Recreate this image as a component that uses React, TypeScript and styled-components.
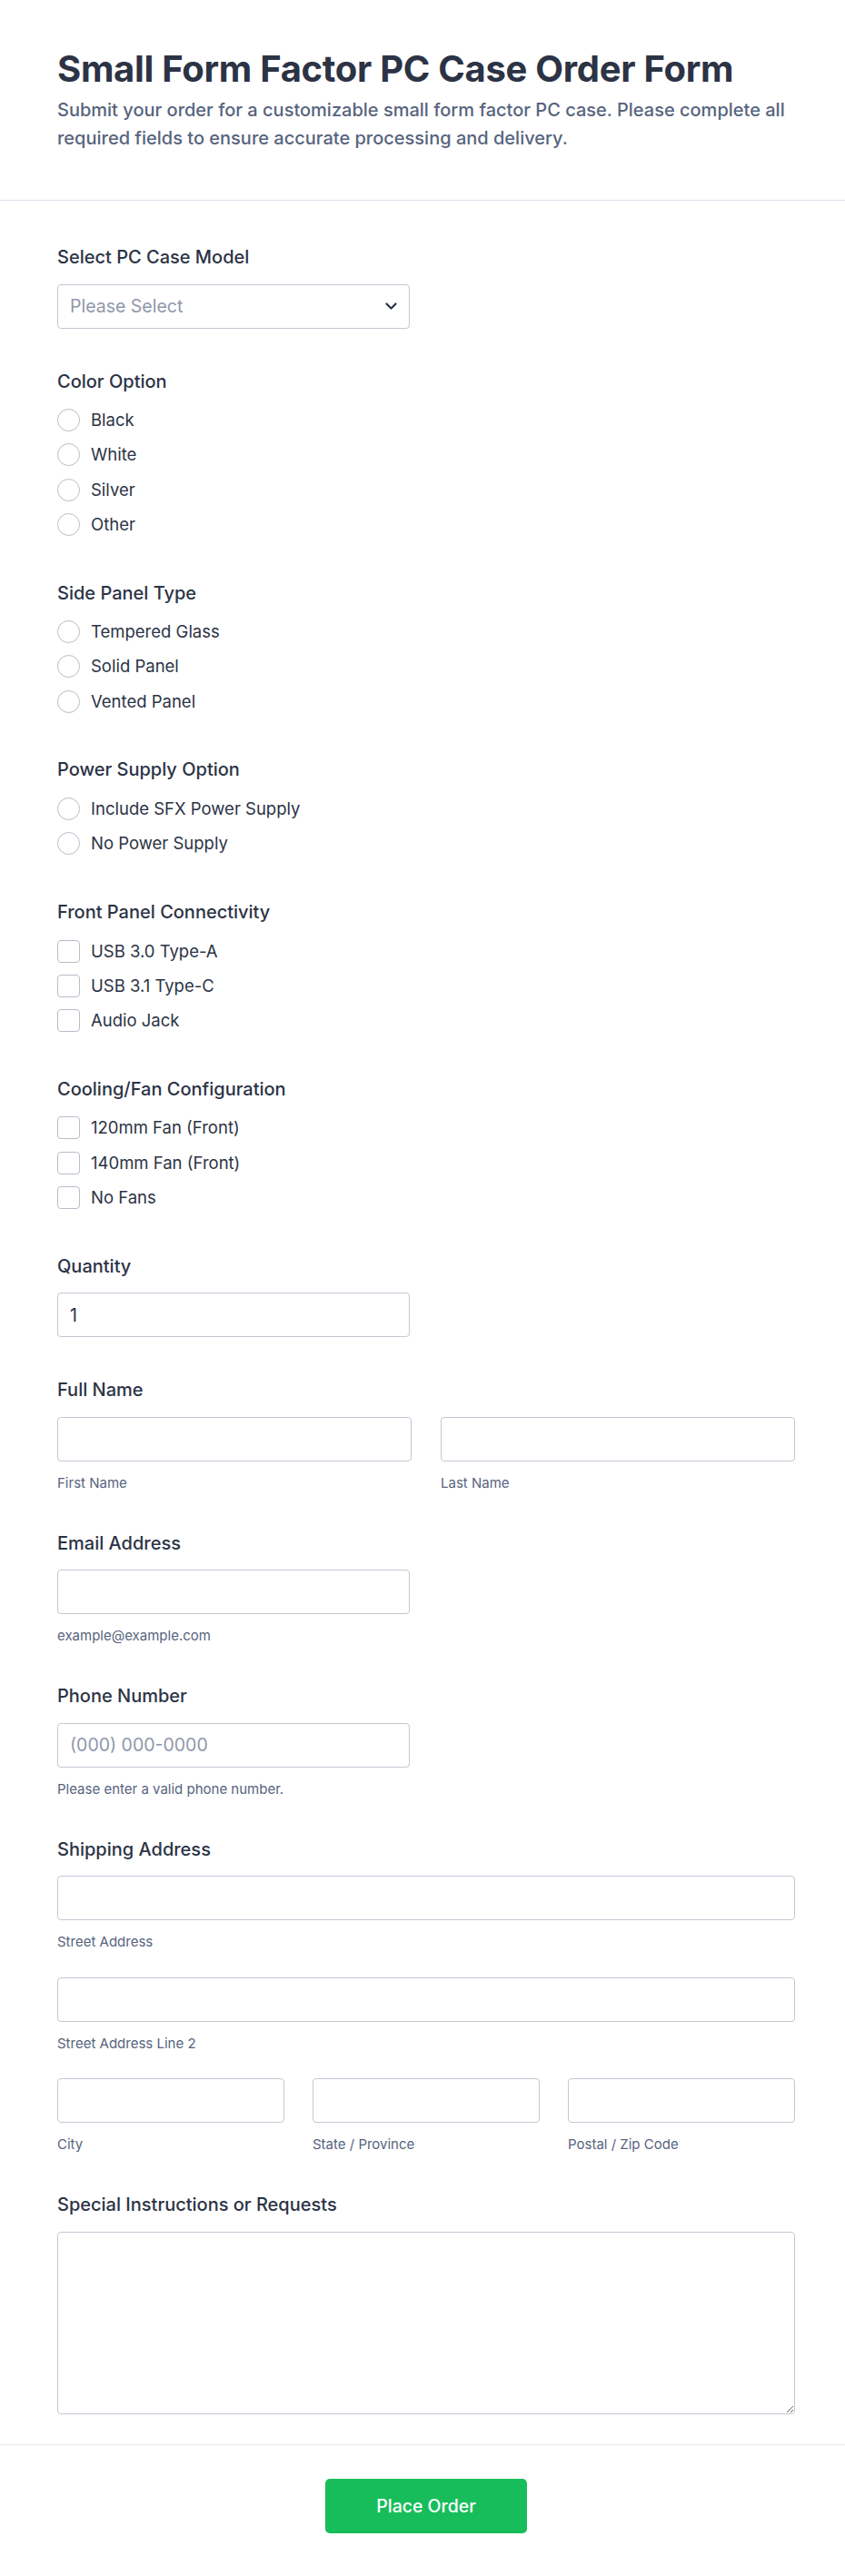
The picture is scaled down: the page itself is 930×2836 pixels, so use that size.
import React from "react";
import styled, { createGlobalStyle } from "styled-components";

const GlobalStyle = createGlobalStyle`
  * {
    box-sizing: border-box;
  }
  body {
    margin: 0;
    background: #ffffff;
    font-family: Inter, "Noto Sans", sans-serif;
    color: #2c3345;
  }
`;

const colorOptions = ["Black", "White", "Silver", "Other"];
const panelOptions = ["Tempered Glass", "Solid Panel", "Vented Panel"];
const powerOptions = ["Include SFX Power Supply", "No Power Supply"];
const connectivityOptions = ["USB 3.0 Type-A", "USB 3.1 Type-C", "Audio Jack"];
const fanOptions = ["120mm Fan (Front)", "140mm Fan (Front)", "No Fans"];

type OptionListProps = {
  items: string[];
  kind: "radio" | "checkbox";
};

const OptionList: React.FC<OptionListProps> = ({ items, kind }) => (
  <Options>
    {items.map((item) => (
      <OptionRow key={item}>
        <Mark $kind={kind} />
        <OptionText>{item}</OptionText>
      </OptionRow>
    ))}
  </Options>
);

const Chevron = () => (
  <svg width="13" height="8" viewBox="0 0 13 8" fill="none">
    <path
      d="M1.5 1.5l5 5 5-5"
      stroke="#2c3345"
      strokeWidth="2.2"
      strokeLinecap="round"
      strokeLinejoin="round"
    />
  </svg>
);

const App: React.FC = () => {
  return (
    <Page>
      <GlobalStyle />
      <Header>
        <Title>Small Form Factor PC Case Order Form</Title>
        <Subtitle>
          Submit your order for a customizable small form factor PC case.
          Please complete all required fields to ensure accurate processing and
          delivery.
        </Subtitle>
      </Header>

      <Body>
        <Field>
          <Label>Select PC Case Model</Label>
          <SelectBox>
            <Placeholder>Please Select</Placeholder>
            <Chevron />
          </SelectBox>
        </Field>

        <Field>
          <Label>Color Option</Label>
          <OptionList items={colorOptions} kind="radio" />
        </Field>

        <Field>
          <Label>Side Panel Type</Label>
          <OptionList items={panelOptions} kind="radio" />
        </Field>

        <Field>
          <Label>Power Supply Option</Label>
          <OptionList items={powerOptions} kind="radio" />
        </Field>

        <Field>
          <Label>Front Panel Connectivity</Label>
          <OptionList items={connectivityOptions} kind="checkbox" />
        </Field>

        <Field>
          <Label>Cooling/Fan Configuration</Label>
          <OptionList items={fanOptions} kind="checkbox" />
        </Field>

        <Field>
          <Label>Quantity</Label>
          <TextInput $half type="text" defaultValue="1" />
        </Field>

        <Field>
          <Label>Full Name</Label>
          <Columns $count={2} $gap={32}>
            <Cell>
              <TextInput type="text" />
              <SubLabel>First Name</SubLabel>
            </Cell>
            <Cell>
              <TextInput type="text" />
              <SubLabel>Last Name</SubLabel>
            </Cell>
          </Columns>
        </Field>

        <Field>
          <Label>Email Address</Label>
          <TextInput $half type="email" />
          <SubLabel>example@example.com</SubLabel>
        </Field>

        <Field>
          <Label>Phone Number</Label>
          <TextInput $half type="tel" placeholder="(000) 000-0000" />
          <SubLabel>Please enter a valid phone number.</SubLabel>
        </Field>

        <Field>
          <Label>Shipping Address</Label>
          <AddressStack>
            <Cell>
              <TextInput type="text" />
              <SubLabel>Street Address</SubLabel>
            </Cell>
            <Cell>
              <TextInput type="text" />
              <SubLabel>Street Address Line 2</SubLabel>
            </Cell>
            <Columns $count={3} $gap={31}>
              <Cell>
                <TextInput type="text" />
                <SubLabel>City</SubLabel>
              </Cell>
              <Cell>
                <TextInput type="text" />
                <SubLabel>State / Province</SubLabel>
              </Cell>
              <Cell>
                <TextInput type="text" />
                <SubLabel>Postal / Zip Code</SubLabel>
              </Cell>
            </Columns>
          </AddressStack>
        </Field>

        <Field>
          <Label>Special Instructions or Requests</Label>
          <TextArea />
        </Field>
      </Body>

      <Footer>
        <SubmitButton type="button">Place Order</SubmitButton>
      </Footer>
    </Page>
  );
};

export default App;

const Page = styled("div")`
  width: 930px;
  background: #ffffff;
`;

const Header = styled("header")`
  padding: 52px 55px 52px 63px;
  border-bottom: 1px solid #dfe3ec;
`;

const Title = styled("h1")`
  margin: 0;
  font-size: 40px;
  line-height: 48px;
  font-weight: 700;
  color: #2c3345;
  letter-spacing: -0.3px;
`;

const Subtitle = styled("p")`
  margin: 6px 0 0;
  font-size: 20px;
  line-height: 31px;
  font-weight: 500;
  color: #57647e;
`;

const Body = styled("main")`
  display: flex;
  flex-direction: column;
  gap: 46px;
  padding: 50px 55px 33px 63px;
`;

const Field = styled("section")`
  display: flex;
  flex-direction: column;
`;

const Label = styled("label")`
  font-size: 20px;
  line-height: 24px;
  font-weight: 500;
  color: #2c3345;
  margin-bottom: 17.5px;
`;

const Options = styled("div")`
  display: flex;
  flex-direction: column;
  gap: 13.3px;
  padding: 1px 0 4.75px;
`;

const OptionRow = styled("div")`
  display: flex;
  align-items: center;
  gap: 12px;
  height: 25px;
`;

const Mark = styled("span")<{ $kind: "radio" | "checkbox" }>`
  flex: none;
  width: 25px;
  height: 25px;
  border: 1px solid #b8bdc9;
  border-radius: ${(p) => (p.$kind === "radio" ? "50%" : "4px")};
  background: #ffffff;
`;

const OptionText = styled("span")`
  font-size: 18.5px;
  line-height: 25px;
  color: #2c3345;
`;

const SelectBox = styled("div")`
  display: flex;
  align-items: center;
  justify-content: space-between;
  width: 388px;
  height: 49px;
  padding: 0 13px 0 13px;
  border: 1px solid #c3c8d4;
  border-radius: 4px;
  background: #ffffff;
`;

const Placeholder = styled("span")`
  font-size: 19.5px;
  color: #8f97ab;
`;

const TextInput = styled("input")<{ $half?: boolean }>`
  display: block;
  width: ${(p) => (p.$half ? "388px" : "100%")};
  height: 49px;
  padding: 0 13px;
  border: 1px solid #c3c8d4;
  border-radius: 4px;
  background: #ffffff;
  font-family: Inter, "Noto Sans", sans-serif;
  font-size: 19.5px;
  color: #2c3345;
  outline: none;

  &::placeholder {
    color: #8f97ab;
  }
`;

const SubLabel = styled("span")`
  display: block;
  margin-top: 15px;
  font-size: 15px;
  line-height: 17px;
  color: #57647e;
`;

const Columns = styled("div")<{ $count: number; $gap: number }>`
  display: grid;
  grid-template-columns: repeat(${(p) => p.$count}, 1fr);
  column-gap: ${(p) => p.$gap}px;
`;

const Cell = styled("div")`
  display: flex;
  flex-direction: column;
  min-width: 0;
`;

const AddressStack = styled("div")`
  display: flex;
  flex-direction: column;
  gap: 30.5px;
`;

const TextArea = styled("textarea")`
  display: block;
  width: 100%;
  height: 201px;
  padding: 12px 14px;
  border: 1px solid #c3c8d4;
  border-radius: 4px;
  font-family: Inter, "Noto Sans", sans-serif;
  font-size: 19.5px;
  resize: vertical;
  outline: none;
`;

const Footer = styled("footer")`
  display: flex;
  justify-content: center;
  padding: 37px 55px 49px 63px;
  border-top: 1px solid #e3e6ec;
`;

const SubmitButton = styled("button")`
  width: 222px;
  height: 60px;
  border: none;
  border-radius: 5px;
  background: #18bd5b;
  color: #ffffff;
  font-family: Inter, "Noto Sans", sans-serif;
  font-size: 19.5px;
  font-weight: 500;
  cursor: pointer;
`;
